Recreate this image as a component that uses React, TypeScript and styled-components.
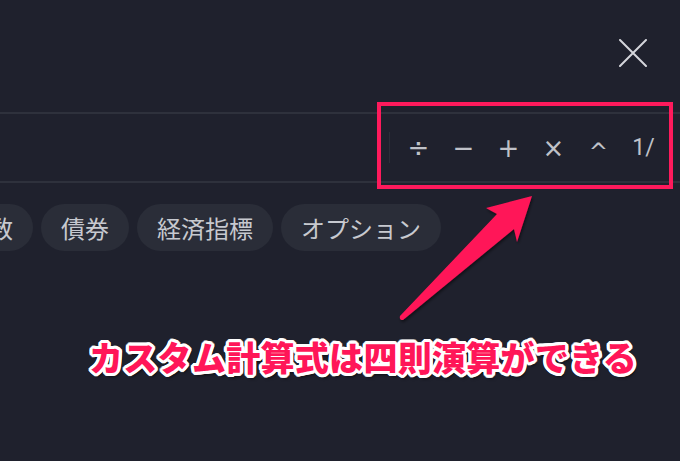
import React from "react";
import styled, { createGlobalStyle } from "styled-components";

const Global = createGlobalStyle`
  html, body { margin: 0; padding: 0; background: #1f212d; }
  body { width: 680px; height: 461px; overflow: hidden; font-family: "Noto Sans CJK JP", "Noto Sans", sans-serif; }
  #root { width: 680px; height: 461px; }
`;

const Page = styled.div`
  position: relative;
  width: 680px;
  height: 461px;
  overflow: hidden;
  background: #1f212d;
  display: flex;
  flex-direction: column;
`;

const Header = styled.div`
  height: 112px;
  display: flex;
  justify-content: flex-end;
  align-items: flex-start;
  padding: 39px 33px 0 0;
  box-sizing: border-box;
`;

const CloseButton = styled.button`
  width: 28px;
  height: 28px;
  padding: 0;
  border: none;
  background: transparent;
  display: flex;
  align-items: center;
  justify-content: center;
  cursor: pointer;
`;

const InputRow = styled.div`
  height: 71px;
  box-sizing: border-box;
  border-top: 2px solid #2e313c;
  border-bottom: 2px solid #2e313c;
  display: flex;
  align-items: center;
  justify-content: flex-end;
  padding-right: 14px;
`;

const Divider = styled.div`
  width: 1px;
  height: 31px;
  background: #2b2e39;
  margin-right: 6px;
`;

const OpButton = styled.button<{ $size?: number; $family?: string; $shift?: number }>`
  width: 45px;
  height: 40px;
  padding: ${(p) => p.$shift ?? 0}px 0 0 0;
  border: none;
  background: transparent;
  color: #bfc1c8;
  font-family: ${(p) => p.$family ?? `"DejaVu Sans", sans-serif`};
  font-size: ${(p) => p.$size ?? 26}px;
  font-weight: 400;
  line-height: 40px;
  text-align: center;
  box-sizing: border-box;
  cursor: pointer;
`;

const PillRow = styled.div`
  display: flex;
  gap: 8px;
  margin-top: 21px;
  margin-left: -55px;
`;

const Pill = styled.button`
  height: 47px;
  padding: 0 20px;
  border: none;
  border-radius: 24px;
  background: #2a2d38;
  color: #c7c9cf;
  font-family: "Noto Sans CJK JP", "Noto Sans", sans-serif;
  font-size: 24px;
  line-height: 47px;
  white-space: nowrap;
  flex: none;
  cursor: pointer;
`;

const HighlightBox = styled.div`
  position: absolute;
  left: 377px;
  top: 102px;
  width: 296px;
  height: 87px;
  box-sizing: border-box;
  border: 4px solid #fe1a5c;
  pointer-events: none;
`;

const ArrowLayer = styled.svg`
  position: absolute;
  left: 0;
  top: 0;
  pointer-events: none;
`;

const Caption = styled.div`
  position: absolute;
  left: 89px;
  top: 339px;
  font-family: "Noto Sans CJK JP", sans-serif;
  font-weight: 900;
  font-size: 34px;
  line-height: 36px;
  letter-spacing: 0.3px;
  color: #ff1658;
  white-space: nowrap;
  text-shadow:
    3px 0 0 #fff, -3px 0 0 #fff, 0 3px 0 #fff, 0 -3px 0 #fff,
    2px 2px 0 #fff, -2px 2px 0 #fff, 2px -2px 0 #fff, -2px -2px 0 #fff,
    3px 1px 0 #fff, -3px 1px 0 #fff, 3px -1px 0 #fff, -3px -1px 0 #fff,
    1px 3px 0 #fff, -1px 3px 0 #fff, 1px -3px 0 #fff, -1px -3px 0 #fff,
    2px 4px 3px rgba(0, 0, 0, 0.6);
`;

const ops: { label: string; size?: number; family?: string; shift?: number }[] = [
  { label: "÷" },
  { label: "−" },
  { label: "+" },
  { label: "×" },
  { label: "^", size: 23, shift: 4 },
  { label: "1/", size: 23, family: `"Roboto", "Liberation Sans", sans-serif` },
];

const pills = ["指数", "債券", "経済指標", "オプション"];

export default function App() {
  return (
    <>
      <Global />
      <Page>
        <Header>
          <CloseButton aria-label="閉じる">
            <svg width="28" height="28" viewBox="0 0 28 28">
              <path d="M1 1 L27 27 M27 1 L1 27" stroke="#d4d6db" strokeWidth="2" strokeLinecap="round" />
            </svg>
          </CloseButton>
        </Header>
        <InputRow>
          <Divider />
          {ops.map((o) => (
            <OpButton key={o.label} $size={o.size} $family={o.family} $shift={o.shift}>
              {o.label}
            </OpButton>
          ))}
        </InputRow>
        <PillRow>
          {pills.map((p) => (
            <Pill key={p}>{p}</Pill>
          ))}
        </PillRow>
        <HighlightBox />
        <ArrowLayer width="680" height="461" viewBox="0 0 680 461">
          <defs>
            <filter id="sh" x="-20%" y="-20%" width="140%" height="140%">
              <feDropShadow dx="1" dy="2" stdDeviation="1.5" floodColor="#000" floodOpacity="0.5" />
            </filter>
          </defs>
          <path
            d="M532 196 L486 208 L497 214 L400 316 Q399 320 403 320 L514 229 L517 242 Z"
            fill="#ff1658"
            filter="url(#sh)"
          />
        </ArrowLayer>
        <Caption>カスタム計算式は四則演算ができる</Caption>
      </Page>
    </>
  );
}
